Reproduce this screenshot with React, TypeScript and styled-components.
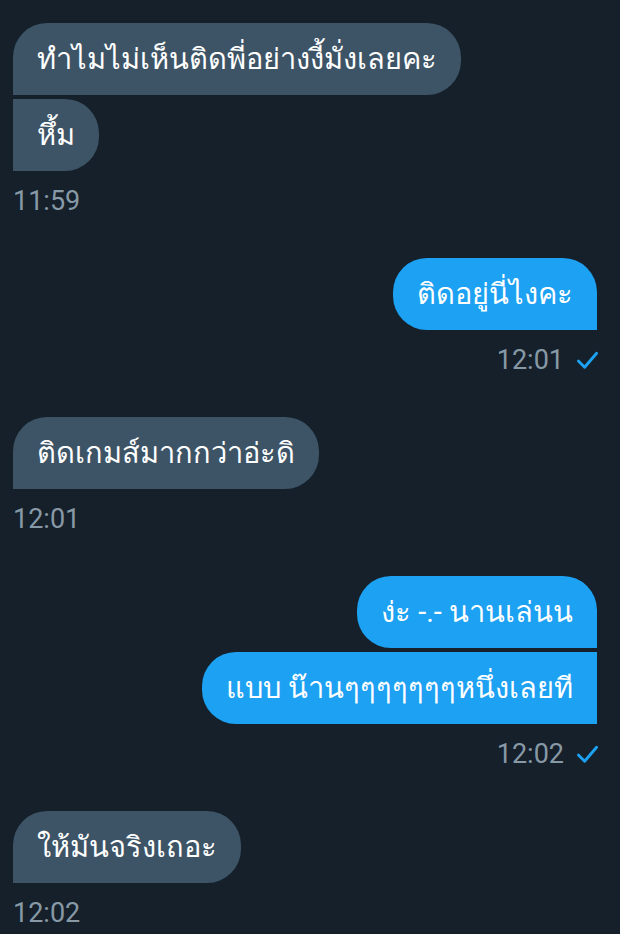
import React from 'react';
import styled, { createGlobalStyle } from 'styled-components';

const GlobalStyle = createGlobalStyle`
  html, body {
    margin: 0;
    padding: 0;
    background: #15202b;
  }
  body {
    font-family: Roboto, "Noto Sans", "DejaVu Sans", sans-serif;
    -webkit-font-smoothing: antialiased;
  }
`;

type Side = 'in' | 'out';

interface Group {
  side: Side;
  messages: string[];
  time: string;
}

const groups: Group[] = [
  { side: 'in', messages: ['ทำไมไม่เห็นติดพี่อย่างงี้มั่งเลยคะ', 'หึ้ม'], time: '11:59' },
  { side: 'out', messages: ['ติดอยู่นี่ไงคะ'], time: '12:01' },
  { side: 'in', messages: ['ติดเกมส์มากกว่าอ่ะดิ'], time: '12:01' },
  { side: 'out', messages: ['ง่ะ -.- นานเล่นน', 'แบบ น๊านๆๆๆๆๆๆๆหนึ่งเลยที'], time: '12:02' },
  { side: 'in', messages: ['ให้มันจริงเถอะ'], time: '12:02' },
];

const Thread = styled.div`
  display: flex;
  flex-direction: column;
  gap: 43px;
  padding: 23px 23px 0 13px;
`;

const GroupBox = styled.div<{ $side: Side }>`
  display: flex;
  flex-direction: column;
  align-items: ${p => (p.$side === 'out' ? 'flex-end' : 'flex-start')};
  gap: 4px;
`;

const Bubble = styled.div<{ $side: Side; $first: boolean }>`
  display: flex;
  align-items: center;
  height: 72px;
  box-sizing: border-box;
  padding: 0 24px;
  font-size: 29px;
  line-height: 40px;
  color: #ffffff;
  white-space: nowrap;
  background: ${p => (p.$side === 'out' ? '#1da1f2' : '#3d5466')};
  border-radius: ${p => {
    const r = '34px';
    if (p.$side === 'out') return `${r} ${p.$first ? r : '0'} 0 ${r}`;
    return `${p.$first ? r : '0'} ${r} ${r} 0`;
  }};
`;

const Meta = styled.div`
  display: flex;
  align-items: center;
  gap: 12px;
  margin-top: 12px;
  height: 28px;
  font-size: 27px;
  color: #8899a6;
`;

const Check = styled.svg`
  width: 23px;
  height: 23px;
  margin-right: -2px;
  color: #1da1f2;
`;

export default function App() {
  return (
    <>
      <GlobalStyle />
      <Thread>
        {groups.map((g, i) => (
          <GroupBox key={i} $side={g.side}>
            {g.messages.map((m, j) => (
              <Bubble key={j} $side={g.side} $first={j === 0}>
                {m}
              </Bubble>
            ))}
            <Meta>
              <span>{g.time}</span>
              {g.side === 'out' && (
                <Check viewBox="0 0 24 24" fill="none">
                  <path d="M2.5 12.5 L9 19 L21.5 4.5" stroke="currentColor" strokeWidth="3" strokeLinecap="round" strokeLinejoin="round" />
                </Check>
              )}
            </Meta>
          </GroupBox>
        ))}
      </Thread>
    </>
  );
}
